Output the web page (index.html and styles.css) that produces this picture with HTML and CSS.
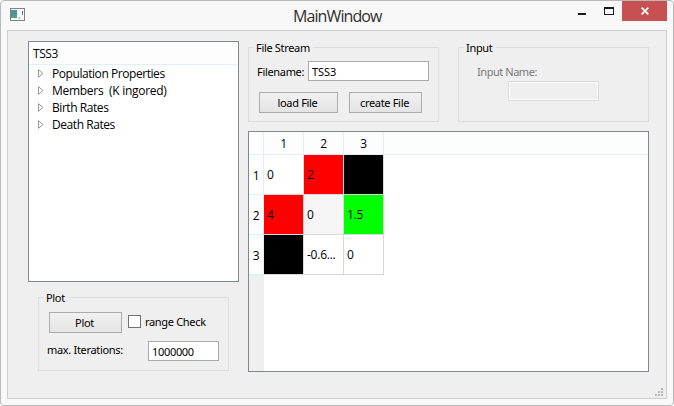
FILE: index.html
```html
<!DOCTYPE html>
<html lang="en">
<head>
<meta charset="utf-8">
<title>MainWindow</title>
<link rel="stylesheet" href="styles.css">
</head>
<body>
<div class="window">
  <header class="titlebar">
    <svg class="app-icon" width="15" height="13" viewBox="0 0 15 13">
      <rect x=".5" y=".5" width="14" height="12" fill="#fbfbfb" stroke="#7d8285"/>
      <rect x="1" y="2" width="6" height="8" fill="#4d8fa0"/>
      <rect x="2" y="6" width="5" height="4" fill="#4f9f80"/>
      <rect x="8" y="9" width="3" height="2" fill="#d2d2d2"/>
      <rect x="12" y="3" width="1" height="2" fill="#2860b0"/>
      <rect x="12" y="5" width="1" height="2" fill="#48a070"/>
    </svg>
    <h1 class="title">MainWindow</h1>
    <div class="controls">
      <svg class="min" width="31" height="20" viewBox="0 0 31 20"><path d="M5 12h8v2H5z" fill="#1c1c1c"/></svg>
      <svg class="max" width="10" height="9" viewBox="0 0 10 9"><path d="M0 0h10v8H0zM1 2v5h8V2z" fill="#1c1c1c" fill-rule="evenodd"/></svg>
      <div class="close"><svg width="8" height="8" viewBox="0 0 8 8"><path d="M.7.7l6.6 6.6M7.3.7L.7 7.3" stroke="#fff" stroke-width="1.7"/></svg></div>
    </div>
  </header>
  <main class="client">
    <div class="left">
      <section class="tree">
        <div class="tree-head">TSS3</div>
        <ul>
          <li><svg width="6" height="9" viewBox="0 0 6 9"><path d="M.5.7v7.6L5 4.5z"/></svg><span>Population Properties</span></li>
          <li><svg width="6" height="9" viewBox="0 0 6 9"><path d="M.5.7v7.6L5 4.5z"/></svg><span class="members">Members&nbsp; (K ingored)</span></li>
          <li><svg width="6" height="9" viewBox="0 0 6 9"><path d="M.5.7v7.6L5 4.5z"/></svg><span>Birth Rates</span></li>
          <li><svg width="6" height="9" viewBox="0 0 6 9"><path d="M.5.7v7.6L5 4.5z"/></svg><span>Death Rates</span></li>
        </ul>
      </section>
      <section class="group plot">
        <h2 class="legend">Plot</h2>
        <div class="row plot-top">
          <div class="button plot-btn">Plot</div>
          <div class="check"></div>
          <span class="check-label">range Check</span>
        </div>
        <div class="row plot-bottom">
          <span class="iter-label">max. Iterations:</span>
          <div class="field iter">1000000</div>
        </div>
      </section>
    </div>
    <div class="right">
      <div class="groups">
        <section class="group stream">
          <h2 class="legend">File Stream</h2>
          <div class="row name-row"><span class="name-label">Filename:</span><div class="field name">TSS3</div></div>
          <div class="row btn-row"><div class="button load">load File</div><div class="button create">create File</div></div>
        </section>
        <section class="group input">
          <h2 class="legend">Input</h2>
          <div class="input-label">Input Name:</div>
          <div class="field disabled"></div>
        </section>
      </div>
      <section class="table">
        <div class="cell head corner"></div><div class="cell head">1</div><div class="cell head">2</div><div class="cell head">3</div><div class="head-rest"></div>
        <div class="cell side">1</div><div class="cell">0</div><div class="cell red">2</div><div class="cell black"></div><div></div>
        <div class="cell side">2</div><div class="cell red">4</div><div class="cell alt">0</div><div class="cell green">1.5</div><div></div>
        <div class="cell side">3</div><div class="cell black"></div><div class="cell">-0.6...</div><div class="cell">0</div><div></div>
        <div class="side-rest"></div>
      </section>
    </div>
    <svg class="grip" width="8" height="8" viewBox="0 0 8 8" fill="#b9b9b9"><path d="M6 0h2v2H6zM3 3h2v2H3zM6 3h2v2H6zM0 6h2v2H0zM3 6h2v2H3zM6 6h2v2H6z"/></svg>
  </main>
</div>
</body>
</html>
```

FILE: styles.css
```css
* { box-sizing: border-box; }
body { margin: 0; background: #fff; }
h1, h2, ul { margin: 0; padding: 0; font-weight: normal; list-style: none; }
.window {
  width: 674px; height: 406px; padding: 0 6px;
  border: 1px solid #b9b9b9; border-radius: 4px;
  background: #f8f8f8; color: #000;
  font: 11px/14px "Noto Sans", sans-serif; letter-spacing: -0.32px;
  white-space: nowrap; overflow: hidden;
}
.titlebar { display: flex; height: 29px; }
.app-icon { margin: 7px 0 0 3px; flex: none; }
.title {
  flex: 1; padding-left: 268px;
  font: 16px/30px "Open Sans", sans-serif; letter-spacing: -0.9px; color: #303030;
}
.controls { display: flex; width: 94px; }
.min { flex: none; }
.max { flex: none; margin: 6px 8px 0 0; }
.close {
  width: 45px; height: 20px; background: #c75050; flex: none;
  display: flex; align-items: center; justify-content: center;
}
.client {
  position: relative; display: flex; gap: 9px;
  width: 660px; height: 369px; padding: 10px 0 0 20px;
  border: 1px solid #cfcfcf; background: #efefef;
}
.left { width: 211px; }
.right { width: 401px; }
.tree {
  height: 241px; border: 1px solid #828790; background: #fff;
  font: 12px/17px "Open Sans", sans-serif; letter-spacing: -0.44px;
}
.tree-head { height: 23px; padding: 3px 0 0 4px; border-bottom: 1px solid #e2effb; background: #fdfdfd; }
.tree li { display: flex; align-items: center; height: 17px; padding-left: 9px; }
.tree li svg { margin-right: 8px; fill: #fff; stroke: #999; }
.members { letter-spacing: -0.28px; }
.group { border: 1px solid #dcdcdc; width: 191px; height: 75px; }
.legend {
  width: max-content; height: 14px; margin: -7px 0 0 5px; padding: 0 3px 0 2px;
  background: #efefef; font: inherit;
}
.row { display: flex; }
.button {
  height: 21px; border: 1px solid #acacac; text-align: center; line-height: 20px;
  background: linear-gradient(#f1f1f1, #e4e4e4);
}
.field { height: 20px; padding-left: 3px; border: 1px solid #ababab; background: #fff; line-height: 19px; }
.plot { margin: 15px 0 0 10px; height: 74px; }
.plot-top { margin: 7px 0 0 10px; }
.plot-btn { width: 73px; padding-right: 2px; }
.check { width: 13px; height: 13px; margin: 3px 4px 0 6px; border: 1px solid #707070; background: #fff; }
.check-label { padding-top: 3px; }
.plot-bottom { margin: 8px 0 0 8px; }
.iter-label { width: 101px; padding-top: 2px; }
.iter { width: 71px; line-height: 20px; }
.groups { display: flex; gap: 19px; margin-top: 6px; }
.stream, .input { flex: none; }
.name-row { margin: 6px 0 0 8px; }
.name-label { width: 51px; padding-top: 4px; }
.name { width: 121px; letter-spacing: -0.1px; }
.btn-row { gap: 11px; margin: 11px 0 0 10px; }
.load { width: 79px; padding-right: 2px; }
.create { width: 73px; padding-right: 2px; }
.input-label { margin: 10px 0 0 18px; color: #787878; letter-spacing: -0.45px; }
.disabled { width: 91px; margin: 2px 0 0 49px; background: #efefef; border-color: #d9d9d9; box-shadow: inset 0 0 0 1px #fff; }
.table {
  display: grid; grid-template-columns: 15px 40px 40px 40px 1fr;
  grid-template-rows: 23px 40px 40px 40px 1fr;
  height: 241px; margin-top: 9px; border: 1px solid #828790; background: #fff;
  font: 12px/39px "Open Sans", sans-serif;
}
.cell { border-right: 1px solid #d8d8d8; border-bottom: 1px solid #d8d8d8; padding-left: 3px; letter-spacing: -0.25px; }
.head, .side { padding: 0; text-align: center; border-color: #e2effb; background: #fdfdfd; }
.head { line-height: 23px; }
.side { line-height: 41px; }
.head-rest { border-bottom: 1px solid #e2effb; background: #fdfdfd; }
.side-rest { background: #efefef; }
.red { background: #f00; }
.black { background: #000; }
.green { background: #0f0; }
.alt { background: #f5f5f5; }
.grip { position: absolute; right: 3px; bottom: 2px; }
```
